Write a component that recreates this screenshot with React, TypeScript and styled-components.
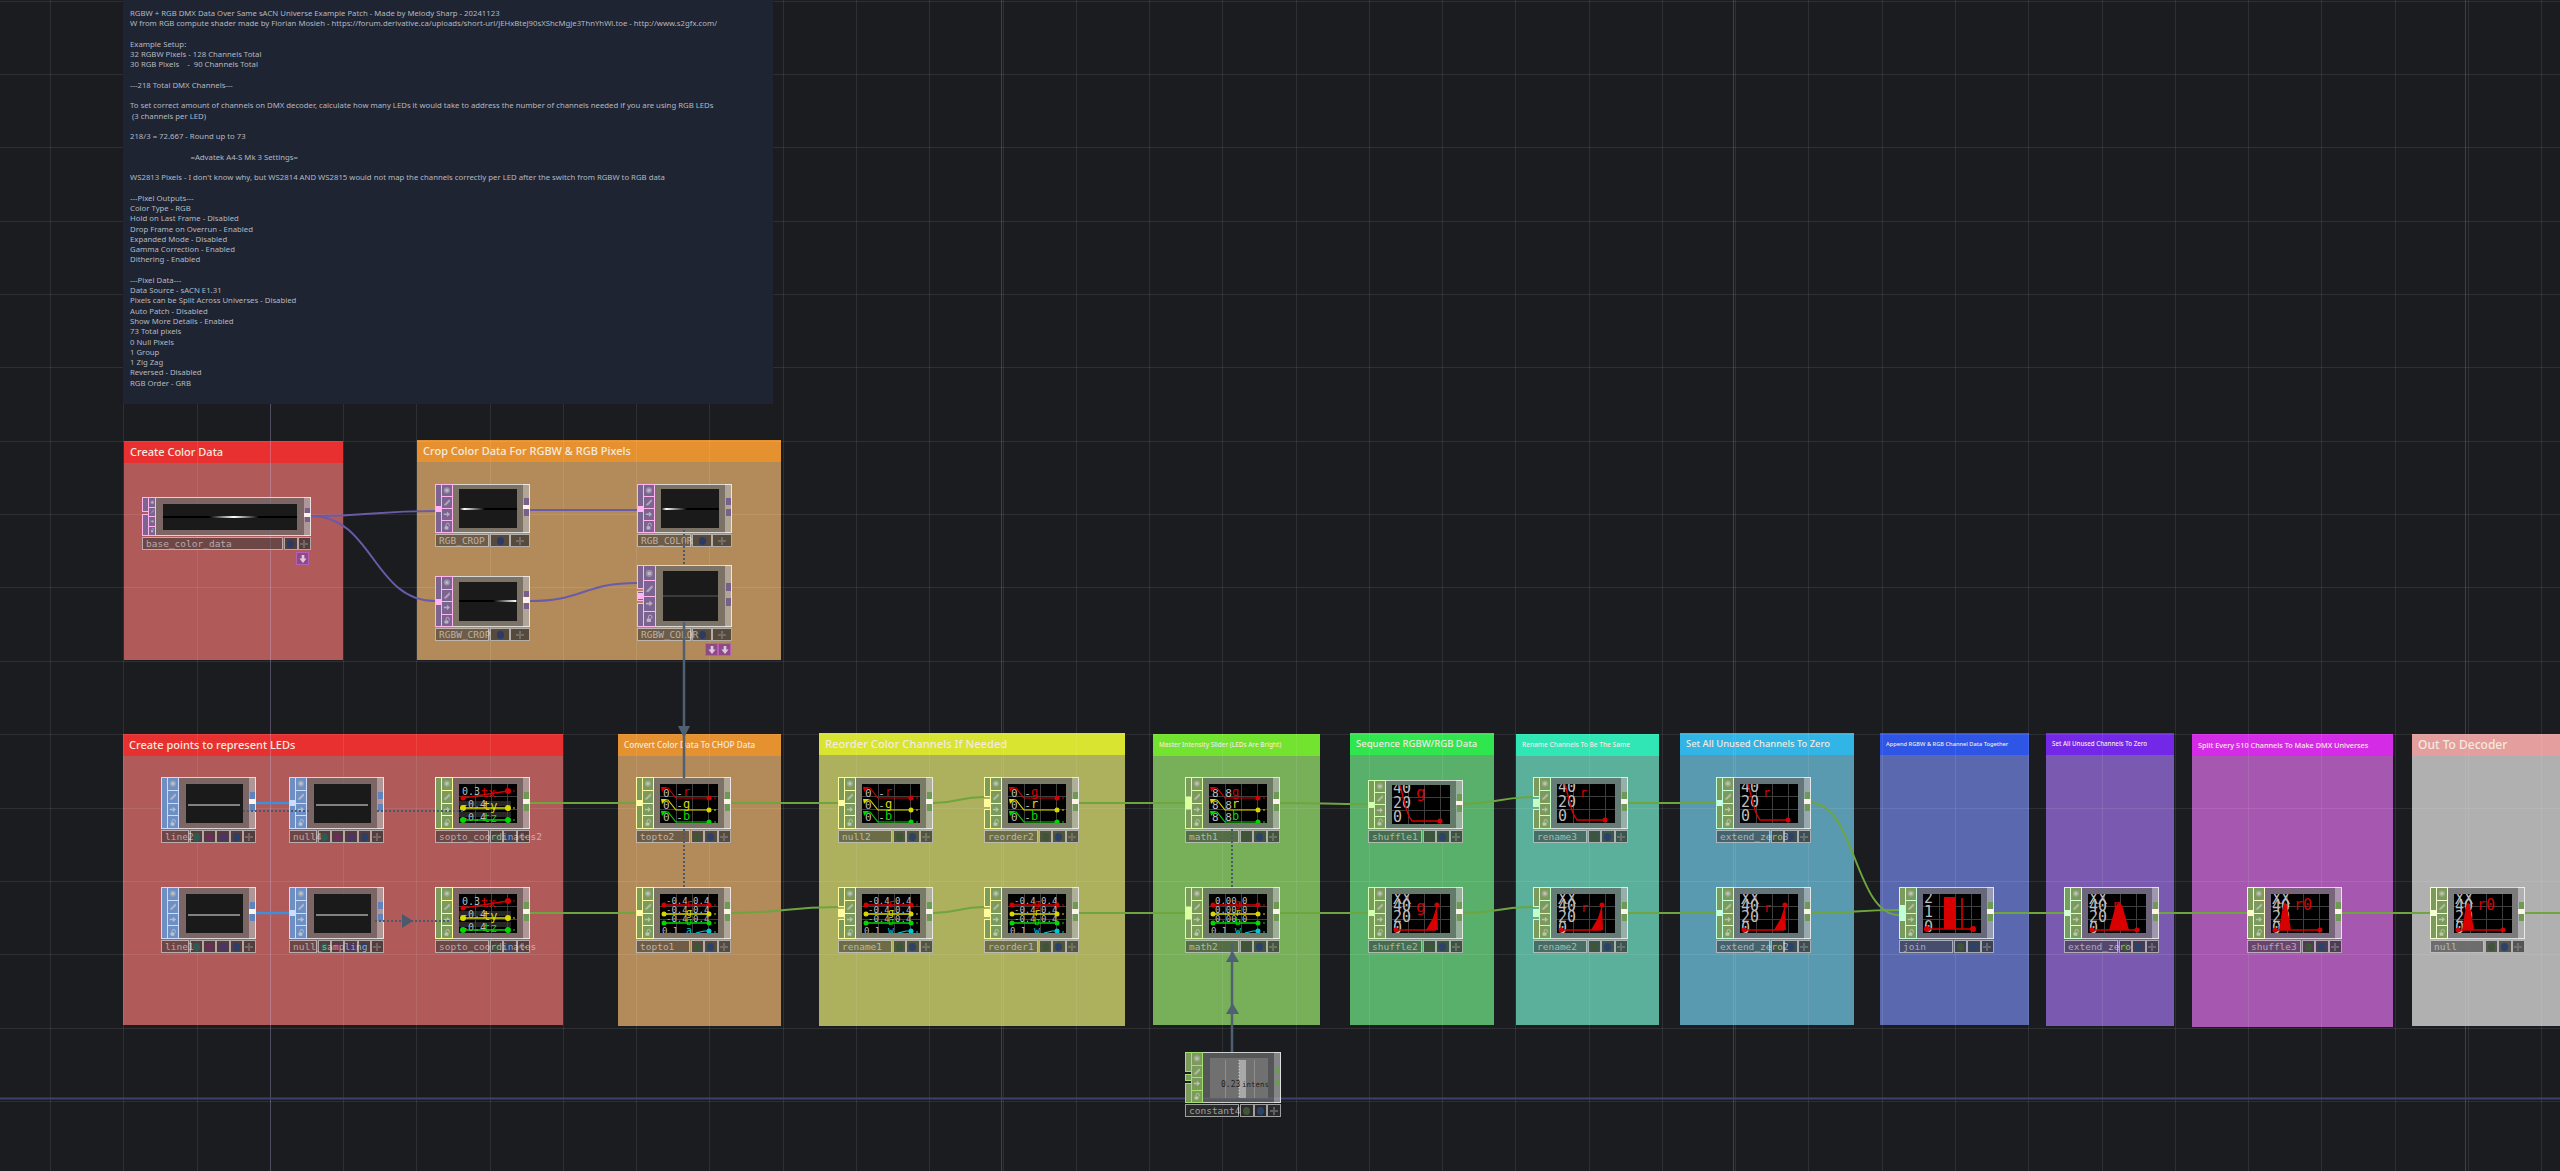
import React from 'react';
import styled, { createGlobalStyle } from 'styled-components';

const GlobalStyle = createGlobalStyle`
	html, body {
		margin: 0;
		padding: 0;
		background: #1a1c20;
		overflow: hidden;
	}
`;

const NOTE = `RGBW + RGB DMX Data Over Same sACN Universe Example Patch - Made by Melody Sharp - 20241123
W from RGB compute shader made by Florian Mosleh - https://forum.derivative.ca/uploads/short-url/jEHxBteJ90sXShcMgje3ThnYhWl.toe - http://www.s2gfx.com/

Example Setup:
32 RGBW Pixels - 128 Channels Total
30 RGB Pixels    -  90 Channels Total

---218 Total DMX Channels---

To set correct amount of channels on DMX decoder, calculate how many LEDs it would take to address the number of channels needed if you are using RGB LEDs
 (3 channels per LED)

218/3 = 72.667 - Round up to 73

                              =Advatek A4-S Mk 3 Settings=

WS2813 Pixels - I don't know why, but WS2814 AND WS2815 would not map the channels correctly per LED after the switch from RGBW to RGB data

---Pixel Outputs---
Color Type - RGB
Hold on Last Frame - Disabled
Drop Frame on Overrun - Enabled
Expanded Mode - Disabled
Gamma Correction - Enabled
Dithering - Enabled

---Pixel Data---
Data Source - sACN E1.31
Pixels can be Split Across Universes - Disabled
Auto Patch - Disabled
Show More Details - Enabled
73 Total pixels
0 Null Pixels
1 Group
1 Zig Zag
Reversed - Disabled
RGB Order - GRB`;

const Canvas = styled.div`
	position: relative;
	width: 2560px;
	height: 1171px;
	overflow: hidden;
	background: #1a1c20;
`;

const Layer = styled.svg<{ $z: number }>`
	position: absolute;
	left: 0;
	top: 0;
	z-index: ${p => p.$z};
	pointer-events: none;
`;

const Comment = styled.div`
	position: absolute;
	left: 123px;
	top: 0;
	width: 650px;
	height: 404px;
	padding: 8px 0 0 7px;
	box-sizing: border-box;
	z-index: 3;
	background: #1e2432;
	color: #b4b8c0;
	font: 7.75px/10.27px 'Noto Sans', sans-serif;
	white-space: pre;
`;

const Group = styled.section<{ $x: number; $y: number; $w: number; $h: number; $body: string }>`
	position: absolute;
	left: ${p => p.$x}px;
	top: ${p => p.$y}px;
	width: ${p => p.$w}px;
	height: ${p => p.$h}px;
	z-index: 1;
	display: flex;
	flex-direction: column;
	background: ${p => p.$body};
`;

const GroupTitle = styled.h2<{ $bg: string; $size: number }>`
	margin: 0;
	height: 22px;
	flex: none;
	padding-left: 6px;
	background: ${p => p.$bg};
	color: #f4eadf;
	font: 500 ${p => p.$size}px/22px 'Noto Sans', sans-serif;
	white-space: nowrap;
	overflow: hidden;
`;

const Card = styled.article<{ $x: number; $y: number; $w: number }>`
	position: absolute;
	left: ${p => p.$x}px;
	top: ${p => p.$y}px;
	width: ${p => p.$w}px;
	z-index: 5;
	display: flex;
	flex-direction: column;
	gap: 1px;
`;

const Face = styled.div<{ $h: number }>`
	height: ${p => p.$h}px;
	display: flex;
	box-sizing: border-box;
`;

const Rail = styled.div`
	position: relative;
	width: 6px;
	flex: none;
	display: flex;
	flex-direction: column;
	gap: 2px;
`;

const RailPart = styled.div<{ $fill: string; $edge: string; $grow: number }>`
	flex: ${p => p.$grow};
	background: ${p => p.$fill};
	border: 1px solid ${p => p.$edge};
	border-right: none;
`;

const Notch = styled.div<{ $edge: string; $h: number }>`
	position: absolute;
	left: 0;
	right: 0;
	top: 50%;
	height: ${p => p.$h}px;
	transform: translateY(-50%);
	background: ${p => p.$edge};
`;

const Icons = styled.div<{ $w: number; $edge: string; $fill: string }>`
	width: ${p => p.$w}px;
	flex: none;
	display: flex;
	flex-direction: column;
	box-sizing: border-box;
	background: ${p => p.$fill};
	border: 1px solid ${p => p.$edge};
	gap: 1px;
`;

const IconCell = styled.div<{ $edge: string }>`
	flex: 1;
	min-height: 0;
	display: flex;
	align-items: center;
	justify-content: center;
	box-shadow: 0 1px 0 ${p => p.$edge};

	svg {
		width: 78%;
		height: 78%;
	}
`;

const Viewer = styled.div`
	flex: 1;
	display: flex;
	align-items: center;
	justify-content: center;
	background: rgba(105, 105, 105, 0.75);
	border-top: 1px solid rgba(255, 255, 255, 0.72);
	border-bottom: 1px solid rgba(255, 255, 255, 0.72);
`;

const Display = styled.div<{ $w: number; $h: number }>`
	width: ${p => p.$w}px;
	height: ${p => p.$h}px;
	overflow: hidden;

	svg {
		display: block;
	}
`;

const OutStrip = styled.div`
	width: 7px;
	flex: none;
	box-sizing: border-box;
	display: flex;
	flex-direction: column;
	justify-content: center;
	align-items: flex-end;
	background: rgba(175, 175, 175, 0.72);
	border: 1px solid rgba(255, 255, 255, 0.72);
	border-left: none;
	padding-bottom: 3px;
`;

const Port = styled.div<{ $fill: string }>`
	width: 5px;
	height: 15%;
	background: ${p => p.$fill};
`;

const PortNotch = styled.div<{ $lit: boolean }>`
	width: ${p => (p.$lit ? 7 : 5)}px;
	margin-right: ${p => (p.$lit ? -1 : 0)}px;
	height: 11%;
	background: ${p => (p.$lit ? '#fdf1ec' : 'transparent')};
`;

const LabelRow = styled.div`
	display: flex;
	height: 13px;
	gap: 1px;
`;

const NameTag = styled.div<{ $w: number }>`
	position: relative;
	width: ${p => p.$w}px;
	flex: none;
	box-sizing: border-box;
	background: rgba(55, 55, 55, 0.55);
	border: 1px solid rgba(255, 255, 255, 0.55);
	font: 9.5px/11px 'DejaVu Sans Mono', monospace;
	color: rgba(232, 232, 232, 0.62);
	padding-left: 3px;
	white-space: nowrap;
	z-index: 2;
`;

const Buttons = styled.div`
	flex: 1;
	display: flex;
	min-width: 0;
`;

const Btn = styled.div`
	flex: 1;
	min-width: 0;
	box-sizing: border-box;
	display: flex;
	align-items: center;
	justify-content: center;
	background: rgba(48, 48, 48, 0.72);
	border: 1px solid rgba(255, 255, 255, 0.55);
`;

const Dot = styled.div<{ $fill: string }>`
	width: 7px;
	height: 8px;
	border-radius: 50%;
	background: ${p => p.$fill};
`;

const Flag = styled.div<{ $x: number; $y: number }>`
	position: absolute;
	left: ${p => p.$x}px;
	top: ${p => p.$y}px;
	width: 13px;
	height: 13px;
	z-index: 5;
	box-sizing: border-box;
	display: flex;
	align-items: center;
	justify-content: center;
	background: #8d4a86;
	border: 1px solid #b85fb4;
`;

const MINOR_X = Array.from({ length: 36 }, (_, k) => 50 + 73.27 * k);
const MINOR_Y = Array.from({ length: 17 }, (_, k) => 0.6 + 73.36 * k);

function GlyphTarget() {
	return (
		<svg viewBox="0 0 10 10">
			<circle cx="5" cy="5" r="4" fill="#b5b5b5" opacity=".55" />
			<circle cx="5" cy="5" r="2" fill="#dcdcdc" opacity=".55" />
		</svg>
	);
}

function GlyphSlash() {
	return (
		<svg viewBox="0 0 10 10">
			<path d="M1.5 8.5 8.5 1.5M3 9 9 3" stroke="#d8d8d8" strokeWidth="1.4" opacity=".55" fill="none" />
		</svg>
	);
}

function GlyphArrow() {
	return (
		<svg viewBox="0 0 10 10">
			<path d="M1 4h4V1.5L9 5 5 8.500V6H1z" fill="#dedede" opacity=".6" />
		</svg>
	);
}

function GlyphLock() {
	return (
		<svg viewBox="0 0 10 10">
			<rect x="2" y="5" width="5" height="4" rx="1" fill="#dedede" opacity=".65" />
			<path d="M4 5V3a2 2 0 0 1 4 0v2" stroke="#dedede" strokeWidth="1.1" fill="none" opacity=".65" />
		</svg>
	);
}

function GlyphPlus() {
	return (
		<svg width="8" height="8" viewBox="0 0 8 8">
			<path d="M4 0v8M0 4h8" stroke="#8a8a8a" strokeWidth="2" opacity=".55" />
		</svg>
	);
}

function GlyphDown() {
	return (
		<svg width="8" height="8" viewBox="0 0 9 9">
			<path d="M3 0h3v4h2.500L4.500 9 .5 4H3z" fill="#dcc8dc" />
		</svg>
	);
}

function Frame({ w, h, bg, children }: { w: number; h: number; bg: string; children: React.ReactNode }) {
	return (
		<svg width={w} height={h} viewBox={`0 0 ${w} ${h}`}>
			<rect width={w} height={h} fill={bg} />
			{children}
		</svg>
	);
}

function TopThumb({ w, h, y, x0, x1, peak, faint }: { w: number; h: number; y: number; x0: number; x1: number; peak: number; faint?: boolean }) {
	const id = `fade-${w}-${x0}-${x1}`;
	return (
		<Frame w={w} h={h} bg="#1a1a1a">
			<defs>
				<linearGradient id={id} x1="0" x2="1" y1="0" y2="0">
					<stop offset="0" stopColor="#000" />
					<stop offset={peak} stopColor="#fff" />
					<stop offset="1" stopColor="#000" />
				</linearGradient>
			</defs>
			{faint ? (
				<rect y={y} width={w} height="2" fill="#3a3a3a" />
			) : (
				<>
					<rect y={y} width={w} height="2" fill="#000" />
					<rect x={x0} y={y} width={x1 - x0} height="2" fill={`url(#${id})`} />
				</>
			)}
		</Frame>
	);
}

function PopLine() {
	return (
		<Frame w={57} h={39} bg="#1a1a1a">
			<rect x="2" y="20.500" width="52" height="1" fill="#e8e8e8" />
		</Frame>
	);
}

function ChartGrid() {
	return (
		<g stroke="#3e3e3e" strokeWidth="1">
			<path d="M16.500 0v39M32.500 0v39M48.500 0v39M0 12.500h58M0 25.500h58" fill="none" />
		</g>
	);
}

function GrayText({ x, y, size = 15, children }: { x: number; y: number; size?: number; children: React.ReactNode }) {
	return (
		<text x={x} y={y} fontFamily="'DejaVu Sans Mono', monospace" fontSize={size} fill="#bdbdbd">
			{children}
		</text>
	);
}

function Tag({ x, y, color, size = 14, children }: { x: number; y: number; color: string; size?: number; children: React.ReactNode }) {
	return (
		<text x={x} y={y} fontFamily="'DejaVu Sans Mono', monospace" fontSize={size} fill={color}>
			{children}
		</text>
	);
}

function SopGraph() {
	return (
		<Frame w={58} h={39} bg="#000">
			<rect y="17" width="52" height="5" fill="#262626" />
			<rect y="28" width="52" height="5" fill="#262626" />
			<ChartGrid />
			<GrayText x={3} y={11} size={10}>0.3</GrayText>
			<GrayText x={3} y={24} size={10}>-0.4</GrayText>
			<GrayText x={3} y={37} size={10}>-0.4</GrayText>
			<Tag x={22} y={13} color="#d80000" size={12}>tx</Tag>
			<Tag x={24} y={26} color="#d8d800" size={12}>ty</Tag>
			<Tag x={24} y={38} color="#00d800" size={12}>tz</Tag>
			<path d="M4 14 49 7" stroke="#d80000" strokeWidth="1.5" />
			<path d="M4 24H49" stroke="#d8d800" strokeWidth="1.5" />
			<path d="M4 36H49" stroke="#00d800" strokeWidth="1.5" />
			<circle cx="4" cy="14" r="2.500" fill="#d80000" />
			<circle cx="49" cy="7" r="3" fill="#d80000" />
			<circle cx="4" cy="24" r="3" fill="#d8d800" />
			<circle cx="49" cy="24" r="3" fill="#d8d800" />
			<circle cx="4" cy="36" r="3" fill="#00d800" />
			<circle cx="49" cy="36" r="3" fill="#00d800" />
			<path d="M54 7h2" stroke="#d80000" />
			<path d="M54 24h2" stroke="#d8d800" />
			<path d="M54 36h2" stroke="#00d800" />
		</Frame>
	);
}

const ROW_COLORS = ['#d80000', '#d8d800', '#00d800'];

function ThreeRows({ tags, gray = '0 -' }: { tags: string[]; gray?: string }) {
	return (
		<Frame w={58} h={39} bg="#000">
			<ChartGrid />
			{tags.map((tag, i) => {
				const y = 14 + i * 12;
				return (
					<g key={i}>
						<GrayText x={3} y={y - 1} size={11}>{gray}</GrayText>
						<Tag x={23} y={y - 2} color={ROW_COLORS[i]} size={12}>{tag}</Tag>
						<path d={`M3 ${y - 10}h5L16 ${y}H49`} stroke={ROW_COLORS[i]} strokeWidth="1.2" fill="none" />
						<path d={`M1 ${y - 11}h6l-5 5z`} fill={ROW_COLORS[i]} />
						<circle cx="49" cy={y} r="2.500" fill={ROW_COLORS[i]} />
						<path d={`M54 ${y}h2`} stroke={ROW_COLORS[i]} />
					</g>
				);
			})}
		</Frame>
	);
}

function FourRows({ tags, gray = '-0.4' }: { tags: string[]; gray?: string }) {
	const colors = [...ROW_COLORS, '#00c8d8'];
	return (
		<Frame w={58} h={39} bg="#000">
			<ChartGrid />
			{tags.map((tag, i) => {
				const y = 11 + i * 9;
				return (
					<g key={i}>
						{i < 3 && (
							<>
								<GrayText x={6} y={y - 1} size={9}>{gray + gray}</GrayText>
								<path d={`M4 ${y}H49`} stroke={colors[i]} strokeWidth="1.5" />
								<circle cx="4" cy={y} r="2.500" fill={colors[i]} />
								<circle cx="49" cy={y} r="2.500" fill={colors[i]} />
							</>
						)}
						{i === 3 && (
							<>
								<GrayText x={2} y={y + 2} size={9}>0.1</GrayText>
								<path d={`M36 ${y + 1}l8-2h5`} stroke={colors[i]} strokeWidth="1.2" fill="none" />
								<circle cx="49" cy={y - 1} r="2.500" fill={colors[i]} />
							</>
						)}
						<Tag x={26} y={y + 2} color={colors[i]} size={10}>{tag}</Tag>
						<path d={`M54 ${y}h2`} stroke={colors[i]} />
					</g>
				);
			})}
		</Frame>
	);
}

function RampDown({ tag, size = 12, bigTag }: { tag: string; size?: number; bigTag?: boolean }) {
	return (
		<Frame w={58} h={39} bg="#000">
			<ChartGrid />
			<GrayText x={1} y={8}>40</GrayText>
			<GrayText x={1} y={23}>20</GrayText>
			<GrayText x={1} y={37}>0</GrayText>
			<Tag x={bigTag ? 24 : 23} y={13} color="#d80000" size={size}>{tag}</Tag>
			<path d="M8 0C12 14 14 30 20 36H49" stroke="#d80000" strokeWidth="1.4" fill="none" />
			<circle cx="48" cy="36" r="2.500" fill="#d80000" />
		</Frame>
	);
}

function RampUp({ tag, size = 12 }: { tag: string; size?: number }) {
	return (
		<Frame w={58} h={39} bg="#000">
			<ChartGrid />
			<GrayText x={1} y={10}>XX</GrayText>
			<GrayText x={1} y={17}>40</GrayText>
			<GrayText x={1} y={28}>20</GrayText>
			<GrayText x={1} y={39}>0</GrayText>
			<Tag x={24} y={18} color="#d80000" size={size}>{tag}</Tag>
			<path d="M4 36H44" stroke="#d80000" strokeWidth="1.4" />
			<path d="M34 36 41 24 45 11 46 36Z" fill="#d80000" />
			<circle cx="4" cy="36" r="2.500" fill="#d80000" />
			<circle cx="45" cy="11" r="2.500" fill="#d80000" />
		</Frame>
	);
}

function JoinGraph() {
	return (
		<Frame w={58} h={39} bg="#000">
			<ChartGrid />
			<GrayText x={1} y={9}>2</GrayText>
			<GrayText x={1} y={23}>1</GrayText>
			<GrayText x={1} y={38}>0</GrayText>
			<path d="M4 35H50" stroke="#d80000" strokeWidth="1.4" />
			<rect x="21" y="3" width="12" height="32" fill="#d80000" />
			<path d="M39 4V35" stroke="#d80000" strokeWidth="1.6" />
			<circle cx="4" cy="35" r="3" fill="#d80000" />
			<circle cx="50" cy="35" r="3" fill="#d80000" />
		</Frame>
	);
}

function BumpGraph({ tag, cx, half, tagX, size = 14 }: { tag: string; cx: number; half: number; tagX: number; size?: number }) {
	return (
		<Frame w={58} h={39} bg="#000">
			<ChartGrid />
			<GrayText x={1} y={10}>XX</GrayText>
			<GrayText x={1} y={17}>40</GrayText>
			<GrayText x={1} y={28}>20</GrayText>
			<GrayText x={1} y={39}>0</GrayText>
			<Tag x={tagX} y={16} color="#d80000" size={size}>{tag}</Tag>
			<path d="M4 36H49" stroke="#d80000" strokeWidth="1.4" />
			<path d={`M${cx - half} 36 L${cx - half / 3} 12 L${cx} 8 L${cx + half / 3} 12 L${cx + half} 36Z`} fill="#d80000" />
			<circle cx="4" cy="36" r="2.500" fill="#d80000" />
			<circle cx="49" cy="36" r="2.500" fill="#d80000" />
		</Frame>
	);
}

function SliderGraph() {
	return (
		<Frame w={58} h={40} bg="#707070">
			<path d="M15.500 2v38M44.500 2v38" stroke="#8e8e8e" />
			<rect x="29" y="2" width="7" height="38" fill="#a8a8a8" />
			<path d="M29 2v38" stroke="#d0d0d0" strokeDasharray="1 2" />
			<text x="11" y="29" fontFamily="'DejaVu Sans Mono', monospace" fontSize="8" fill="#222">0.23</text>
			<text x="32" y="29" fontFamily="'DejaVu Sans Mono', monospace" fontSize="7.500" fill="#222">intensi</text>
		</Frame>
	);
}

type Family = 'top' | 'pop' | 'chop';

const FILL: Record<Family, string> = { top: '#7b6490', pop: '#6e8fc4', chop: '#7b9a5c' };
const PORT: Record<Family, string> = { top: '#76608c', pop: '#5f84bc', chop: '#6f9a55' };
const EDGE: Record<Family, string> = { top: '#ffb4ef', pop: '#cbdcff', chop: '#ffff96' };

const BUTTONS: Record<Family, string[]> = {
	top: ['#2c3a66'],
	chop: ['#3e5538', '#2c4268'],
	pop: ['#2f5a52', '#6a2f58', '#4a3468', '#2c3f68'],
};

type NodeSpec = {
	name: string;
	x: number;
	y: number;
	family: Family;
	chart: React.ReactNode;
	w?: number;
	h?: number;
	nameW?: number;
	iconW?: number;
	dw?: number;
	dh?: number;
	edge?: string;
	parts?: number[];
	inW?: number;
	inLit?: boolean;
	outLit?: boolean;
};

function OpNode({ n }: { n: NodeSpec }) {
	const edge = n.edge ?? EDGE[n.family];
	const fill = FILL[n.family];
	const w = n.w ?? 95;
	const h = n.h ?? 52;
	const lit = n.inLit ?? true;
	return (
		<Card $x={n.x} $y={n.y} $w={w}>
			<Face $h={h}>
				<Rail>
					{(n.parts ?? [1]).map((grow, i) => (
						<RailPart key={i} $fill={fill} $edge={edge} $grow={grow} />
					))}
					{lit && <Notch $edge={edge} $h={n.inW ?? 6} />}
				</Rail>
				<Icons $w={n.iconW ?? 12} $edge={edge} $fill={fill}>
					<IconCell $edge={edge}><GlyphTarget /></IconCell>
					<IconCell $edge={edge}><GlyphSlash /></IconCell>
					<IconCell $edge={edge}><GlyphArrow /></IconCell>
					<IconCell $edge={edge}><GlyphLock /></IconCell>
				</Icons>
				<Viewer>
					<Display $w={n.dw ?? 58} $h={n.dh ?? 39}>{n.chart}</Display>
				</Viewer>
				<OutStrip>
					<Port $fill={PORT[n.family]} />
					<PortNotch $lit={n.outLit ?? true} />
					<Port $fill={PORT[n.family]} />
				</OutStrip>
			</Face>
			<LabelRow>
				<NameTag $w={n.nameW ?? 54}>{n.name}</NameTag>
				<Buttons>
					{BUTTONS[n.family].map(color => (
						<Btn key={color}><Dot $fill={color} /></Btn>
					))}
					<Btn><GlyphPlus /></Btn>
				</Buttons>
			</LabelRow>
		</Card>
	);
}

const SPLIT = [3, 1, 3];
const ROW1 = 777;
const ROW2 = 887;

const NODES: NodeSpec[] = [
	{ name: 'base_color_data', x: 142, y: 497, family: 'top', w: 169, h: 39, nameW: 141, iconW: 8, dw: 134, dh: 26, parts: [2, 3], inLit: false, chart: <TopThumb w={134} h={26} y={12} x0={46} x1={96} peak={0.5} /> },
	{ name: 'RGB_CROP', x: 435, y: 484, family: 'top', h: 49, chart: <TopThumb w={58} h={39} y={19} x0={0} x1={26} peak={0.2} /> },
	{ name: 'RGB_COLOR', x: 637, y: 484, family: 'top', h: 49, outLit: false, chart: <TopThumb w={58} h={39} y={19} x0={0} x1={26} peak={0.2} /> },
	{ name: 'RGBW_CROP', x: 435, y: 576, family: 'top', h: 51, chart: <TopThumb w={58} h={39} y={18} x0={34} x1={58} peak={0.95} /> },
	{ name: 'RGBW_COLOR', x: 637, y: 565, family: 'top', h: 62, iconW: 13, dw: 55, dh: 50, parts: SPLIT, outLit: false, chart: <TopThumb w={55} h={50} y={24} x0={0} x1={55} peak={0.5} faint /> },

	{ name: 'line2', x: 161, y: ROW1, family: 'pop', nameW: 28, inLit: false, dw: 57, chart: <PopLine /> },
	{ name: 'null4', x: 289, y: ROW1, family: 'pop', nameW: 28, dw: 57, outLit: false, chart: <PopLine /> },
	{ name: 'sopto_coordinates2', x: 435, y: ROW1, family: 'chop', inLit: false, chart: <SopGraph /> },
	{ name: 'line1', x: 161, y: ROW2, family: 'pop', nameW: 28, inLit: false, dw: 57, chart: <PopLine /> },
	{ name: 'null_sampling', x: 289, y: ROW2, family: 'pop', nameW: 28, dw: 57, outLit: false, chart: <PopLine /> },
	{ name: 'sopto_coordinates', x: 435, y: ROW2, family: 'chop', inLit: false, chart: <SopGraph /> },

	{ name: 'topto2', x: 636, y: ROW1, family: 'chop', edge: '#fff6a0', chart: <ThreeRows tags={['r', 'g', 'b']} /> },
	{ name: 'topto1', x: 636, y: ROW2, family: 'chop', edge: '#fff6a0', chart: <FourRows tags={['r', 'g', 'b', 'a']} /> },
	{ name: 'null2', x: 838, y: ROW1, family: 'chop', edge: '#fffca0', chart: <ThreeRows tags={['r', 'g', 'b']} /> },
	{ name: 'rename1', x: 838, y: ROW2, family: 'chop', edge: '#fffca0', parts: SPLIT, chart: <FourRows tags={['r', 'g', 'b', 'w']} /> },
	{ name: 'reorder2', x: 984, y: ROW1, family: 'chop', edge: '#fffca0', parts: SPLIT, chart: <ThreeRows tags={['g', 'r', 'b']} /> },
	{ name: 'reorder1', x: 984, y: ROW2, family: 'chop', edge: '#fffca0', parts: SPLIT, chart: <FourRows tags={['g', 'r', 'b', 'w']} /> },
	{ name: 'math1', x: 1185, y: ROW1, family: 'chop', edge: '#dcffa0', inW: 13, chart: <ThreeRows tags={['g', 'r', 'b']} gray="8 8" /> },
	{ name: 'math2', x: 1185, y: ROW2, family: 'chop', edge: '#dcffa0', inW: 13, chart: <FourRows tags={['g', 'r', 'b', 'w']} gray="0.0" /> },

	{ name: 'shuffle1', x: 1368, y: 780, h: 49, family: 'chop', edge: '#d0ffb0', chart: <RampDown tag="g" size={16} bigTag /> },
	{ name: 'shuffle2', x: 1368, y: ROW2, family: 'chop', edge: '#d0ffb0', chart: <RampUp tag="g" size={16} /> },
	{ name: 'rename3', x: 1533, y: ROW1, family: 'chop', edge: '#c4ffc8', parts: SPLIT, chart: <RampDown tag="r" /> },
	{ name: 'rename2', x: 1533, y: ROW2, family: 'chop', edge: '#c4ffc8', parts: SPLIT, chart: <RampUp tag="r" /> },
	{ name: 'extend_zero3', x: 1716, y: ROW1, family: 'chop', edge: '#c0ffe0', nameW: 54, chart: <RampDown tag="r" /> },
	{ name: 'extend_zero2', x: 1716, y: ROW2, family: 'chop', edge: '#c0ffe0', nameW: 54, chart: <RampUp tag="r" /> },
	{ name: 'join', x: 1899, y: ROW2, family: 'chop', edge: '#bfffd8', inW: 16, chart: <JoinGraph /> },
	{ name: 'extend_zero', x: 2064, y: ROW2, family: 'chop', edge: '#d4ffd8', chart: <BumpGraph tag="n" cx={31} half={10} tagX={25} /> },
	{ name: 'shuffle3', x: 2247, y: ROW2, family: 'chop', edge: '#fffbc8', chart: <BumpGraph tag="r0" cx={14} half={6} tagX={23} size={15} /> },
	{ name: 'null', x: 2430, y: ROW2, family: 'chop', edge: '#f6ffd4', chart: <BumpGraph tag="r0" cx={14} half={6} tagX={23} size={15} /> },
	{ name: 'constant4', x: 1185, y: 1052, family: 'chop', edge: '#a4e070', h: 51, w: 96, parts: SPLIT, dh: 40, inLit: false, outLit: false, chart: <SliderGraph /> },
];

type Box = { title: string; x: number; y: number; w: number; h: number; head: string; body: string; size: number };

const BOXES: Box[] = [
	{ title: 'Create Color Data', x: 124, y: 441, w: 219, h: 219, head: '#e83030', body: '#b05a5a', size: 11 },
	{ title: 'Crop Color Data For RGBW & RGB Pixels', x: 417, y: 440, w: 364, h: 220, head: '#e59130', body: '#b38b5a', size: 11 },
	{ title: 'Create points to represent LEDs', x: 123, y: 734, w: 440, h: 291, head: '#e83030', body: '#b05a5a', size: 11 },
	{ title: 'Convert Color Data To CHOP Data', x: 618, y: 734, w: 163, h: 292, head: '#e59130', body: '#b38b5a', size: 8.2 },
	{ title: 'Reorder Color Channels If Needed', x: 819, y: 733, w: 306, h: 293, head: '#d8e430', body: '#adb05c', size: 11.2 },
	{ title: 'Master Intensity Slider (LEDs Are Bright)', x: 1153, y: 734, w: 167, h: 291, head: '#72e32f', body: '#78b05a', size: 6.4 },
	{ title: 'Sequence RGBW/RGB Data', x: 1350, y: 733, w: 144, h: 292, head: '#30e64f', body: '#58b06a', size: 9.5 },
	{ title: 'Rename Channels To Be The Same', x: 1516, y: 734, w: 143, h: 291, head: '#30e6b5', body: '#5ab09a', size: 6.6 },
	{ title: 'Set All Unused Channels To Zero', x: 1680, y: 733, w: 174, h: 292, head: '#30b5e6', body: '#5a9ab0', size: 9.4 },
	{ title: 'Append RGBW & RGB Channel Data Together', x: 1880, y: 733, w: 149, h: 292, head: '#2f55e6', body: '#5a68b0', size: 5.7 },
	{ title: 'Set All Unused Channels To Zero', x: 2046, y: 733, w: 128, h: 293, head: '#7228e6', body: '#7a5ab0', size: 6.2 },
	{ title: 'Split Every 510 Channels To Make DMX Universes', x: 2192, y: 734, w: 201, h: 293, head: '#d42be6', body: '#a658b0', size: 7.3 },
	{ title: 'Out To Decoder', x: 2412, y: 734, w: 148, h: 292, head: '#e49e9e', body: '#b0b0b0', size: 12 },
];

// [x1, y1, x2, y2]
type Seg = [number, number, number, number];

const TOP_WIRES: Seg[] = [
	[311, 516, 435, 511],
	[311, 516, 435, 601],
	[530, 510, 637, 510],
	[530, 601, 637, 583],
];

const POP_WIRES: Seg[] = [
	[256, 803, 289, 803],
	[256, 913, 289, 913],
];

const CHOP_WIRES: Seg[] = [
	[530, 803, 636, 803],
	[530, 913, 636, 913],
	[731, 803, 838, 803],
	[731, 913, 838, 907],
	[933, 803, 984, 797],
	[933, 913, 984, 907],
	[1079, 803, 1185, 803],
	[1079, 913, 1185, 913],
	[1280, 803, 1368, 804],
	[1280, 913, 1368, 913],
	[1463, 804, 1533, 797],
	[1463, 913, 1533, 907],
	[1628, 803, 1716, 803],
	[1628, 913, 1716, 913],
	[1811, 803, 1899, 915],
	[1811, 913, 1899, 910],
	[1994, 913, 2064, 913],
	[2159, 913, 2247, 913],
	[2342, 913, 2430, 913],
	[2525, 913, 2560, 913],
];

const DOTTED: Seg[] = [
	[684, 530, 684, 565],
	[684, 829, 684, 887],
	[1232, 829, 1232, 887],
	[243, 811, 310, 811],
	[377, 811, 463, 811],
	[375, 921, 450, 921],
];

function curve([x1, y1, x2, y2]: Seg) {
	const mx = (x1 + x2) / 2;
	return `M${x1} ${y1}C${mx} ${y1} ${mx} ${y2} ${x2} ${y2}`;
}

function WireSet({ segs, color, width }: { segs: Seg[]; color: string; width: number }) {
	return (
		<g fill="none" stroke={color} strokeWidth={width}>
			{segs.map((seg, i) => (
				<path key={i} d={curve(seg)} />
			))}
		</g>
	);
}

export default function App() {
	return (
		<Canvas>
			<GlobalStyle />
			{BOXES.map(box => (
				<Group key={box.x} $x={box.x} $y={box.y} $w={box.w} $h={box.h} $body={box.body}>
					<GroupTitle $bg={box.head} $size={box.size}>{box.title}</GroupTitle>
				</Group>
			))}

			<Layer $z={2} width={2560} height={1171}>
				<g stroke="#fff" strokeOpacity=".085">
					{MINOR_X.map(x => (
						<path key={x} d={`M${Math.round(x) + 0.5} 0V1171`} />
					))}
					{MINOR_Y.map(y => (
						<path key={y} d={`M0 ${Math.round(y) + 0.5}H2560`} />
					))}
				</g>
				<g stroke="#c8b4ff" strokeOpacity=".22">
					<path d="M270.500 0V1171M1001.500 0V1171M1733.500 0V1171M2465.500 0V1171" />
				</g>
				<path d="M0 1098.500H2560" stroke="#3c4170" strokeWidth="2" />
			</Layer>

			<Comment>{NOTE}</Comment>

			<Layer $z={4} width={2560} height={1171}>
				<WireSet segs={TOP_WIRES} color="#6a5aa8" width={2} />
				<WireSet segs={POP_WIRES} color="#3f8fdc" width={2.5} />
				<WireSet segs={CHOP_WIRES} color="#6ea53f" width={2} />
			</Layer>

			{NODES.map(n => (
				<OpNode key={n.name} n={n} />
			))}

			<Flag $x={296} $y={552}><GlyphDown /></Flag>
			<Flag $x={705} $y={643}><GlyphDown /></Flag>
			<Flag $x={718} $y={643}><GlyphDown /></Flag>

			<Layer $z={6} width={2560} height={1171}>
				<g fill="none" stroke="#4a5a6c" strokeWidth="2" strokeDasharray="2 2">
					{DOTTED.map((seg, i) => (
						<path key={i} d={`M${seg[0]} ${seg[1]}L${seg[2]} ${seg[3]}`} />
					))}
				</g>
				<path d="M684 622V778" stroke="#4f6072" strokeWidth="2.500" />
				<path d="M678 726H690L684 738Z" fill="#4f6072" />
				<path d="M402 914V928L413 921Z" fill="#4a5a6c" />
				<path d="M1232 1052V943" stroke="#4f6072" strokeWidth="2.500" />
				<path d="M1226 962H1239L1232.500 951Z" fill="#4f6072" />
				<path d="M1226 1014H1239L1232.500 1003Z" fill="#4f6072" />
			</Layer>
		</Canvas>
	);
}
